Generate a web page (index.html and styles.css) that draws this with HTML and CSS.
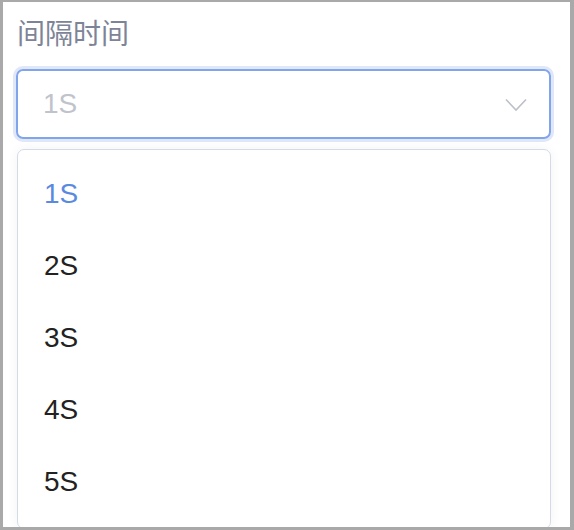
FILE: index.html
```html
<!DOCTYPE html>
<html lang="zh">
<head>
<meta charset="utf-8">
<link rel="stylesheet" href="styles.css">
</head>
<body>
<div class="frame">
  <div class="label">间隔时间</div>
  <div class="select">
    <span class="placeholder">1S</span>
    <svg class="chevron" width="22" height="14" viewBox="0 0 22 14"><path d="M1 1.5 L11 12 L21 1.5" fill="none" stroke="#bcc0c8" stroke-width="1.6"/></svg>
  </div>
  <ul class="menu">
    <li class="item active">1S</li>
    <li class="item">2S</li>
    <li class="item">3S</li>
    <li class="item">4S</li>
    <li class="item">5S</li>
  </ul>
</div>
</body>
</html>
```
FILE: styles.css
```css
* { box-sizing: border-box; }
html, body { margin: 0; padding: 0; background: #ffffff; }
.frame {
  width: 574px;
  height: 530px;
  border-style: solid;
  border-color: #a9a9a9;
  border-width: 2px 4px 3px 3px;
  background: #fff;
  padding: 0 19px 0 13px;
  overflow: hidden;
  font-family: "Liberation Sans", Arial, "Noto Sans CJK SC", sans-serif;
}
.label {
  font-family: "Noto Sans CJK SC", sans-serif;
  font-size: 28px;
  line-height: 32px;
  color: #7d8496;
  padding: 14px 0 0 1px;
  height: 67px;
}
.select {
  height: 70px;
  border: 2px solid #80a5ea;
  border-radius: 7px;
  box-shadow: 0 0 0 3px #dfe7f8;
  display: flex;
  align-items: center;
  justify-content: space-between;
  padding: 0 22px 0 25px;
}
.placeholder {
  font-size: 28px;
  color: #bfc3cb;
}
.chevron { display: block; margin-top: 2px; }
.menu {
  list-style: none;
  margin: 10px 0 0 1px;
  padding: 8px 0;
  border: 1px solid #d3dbe7;
  border-radius: 7px;
  box-shadow: 0 0 12px rgba(0, 0, 0, 0.05);
  height: 380px;
}
.item {
  height: 72px;
  line-height: 72px;
  padding-left: 26px;
  font-size: 28px;
  color: #222;
}
.item.active { color: #5a8ae0; }
```
